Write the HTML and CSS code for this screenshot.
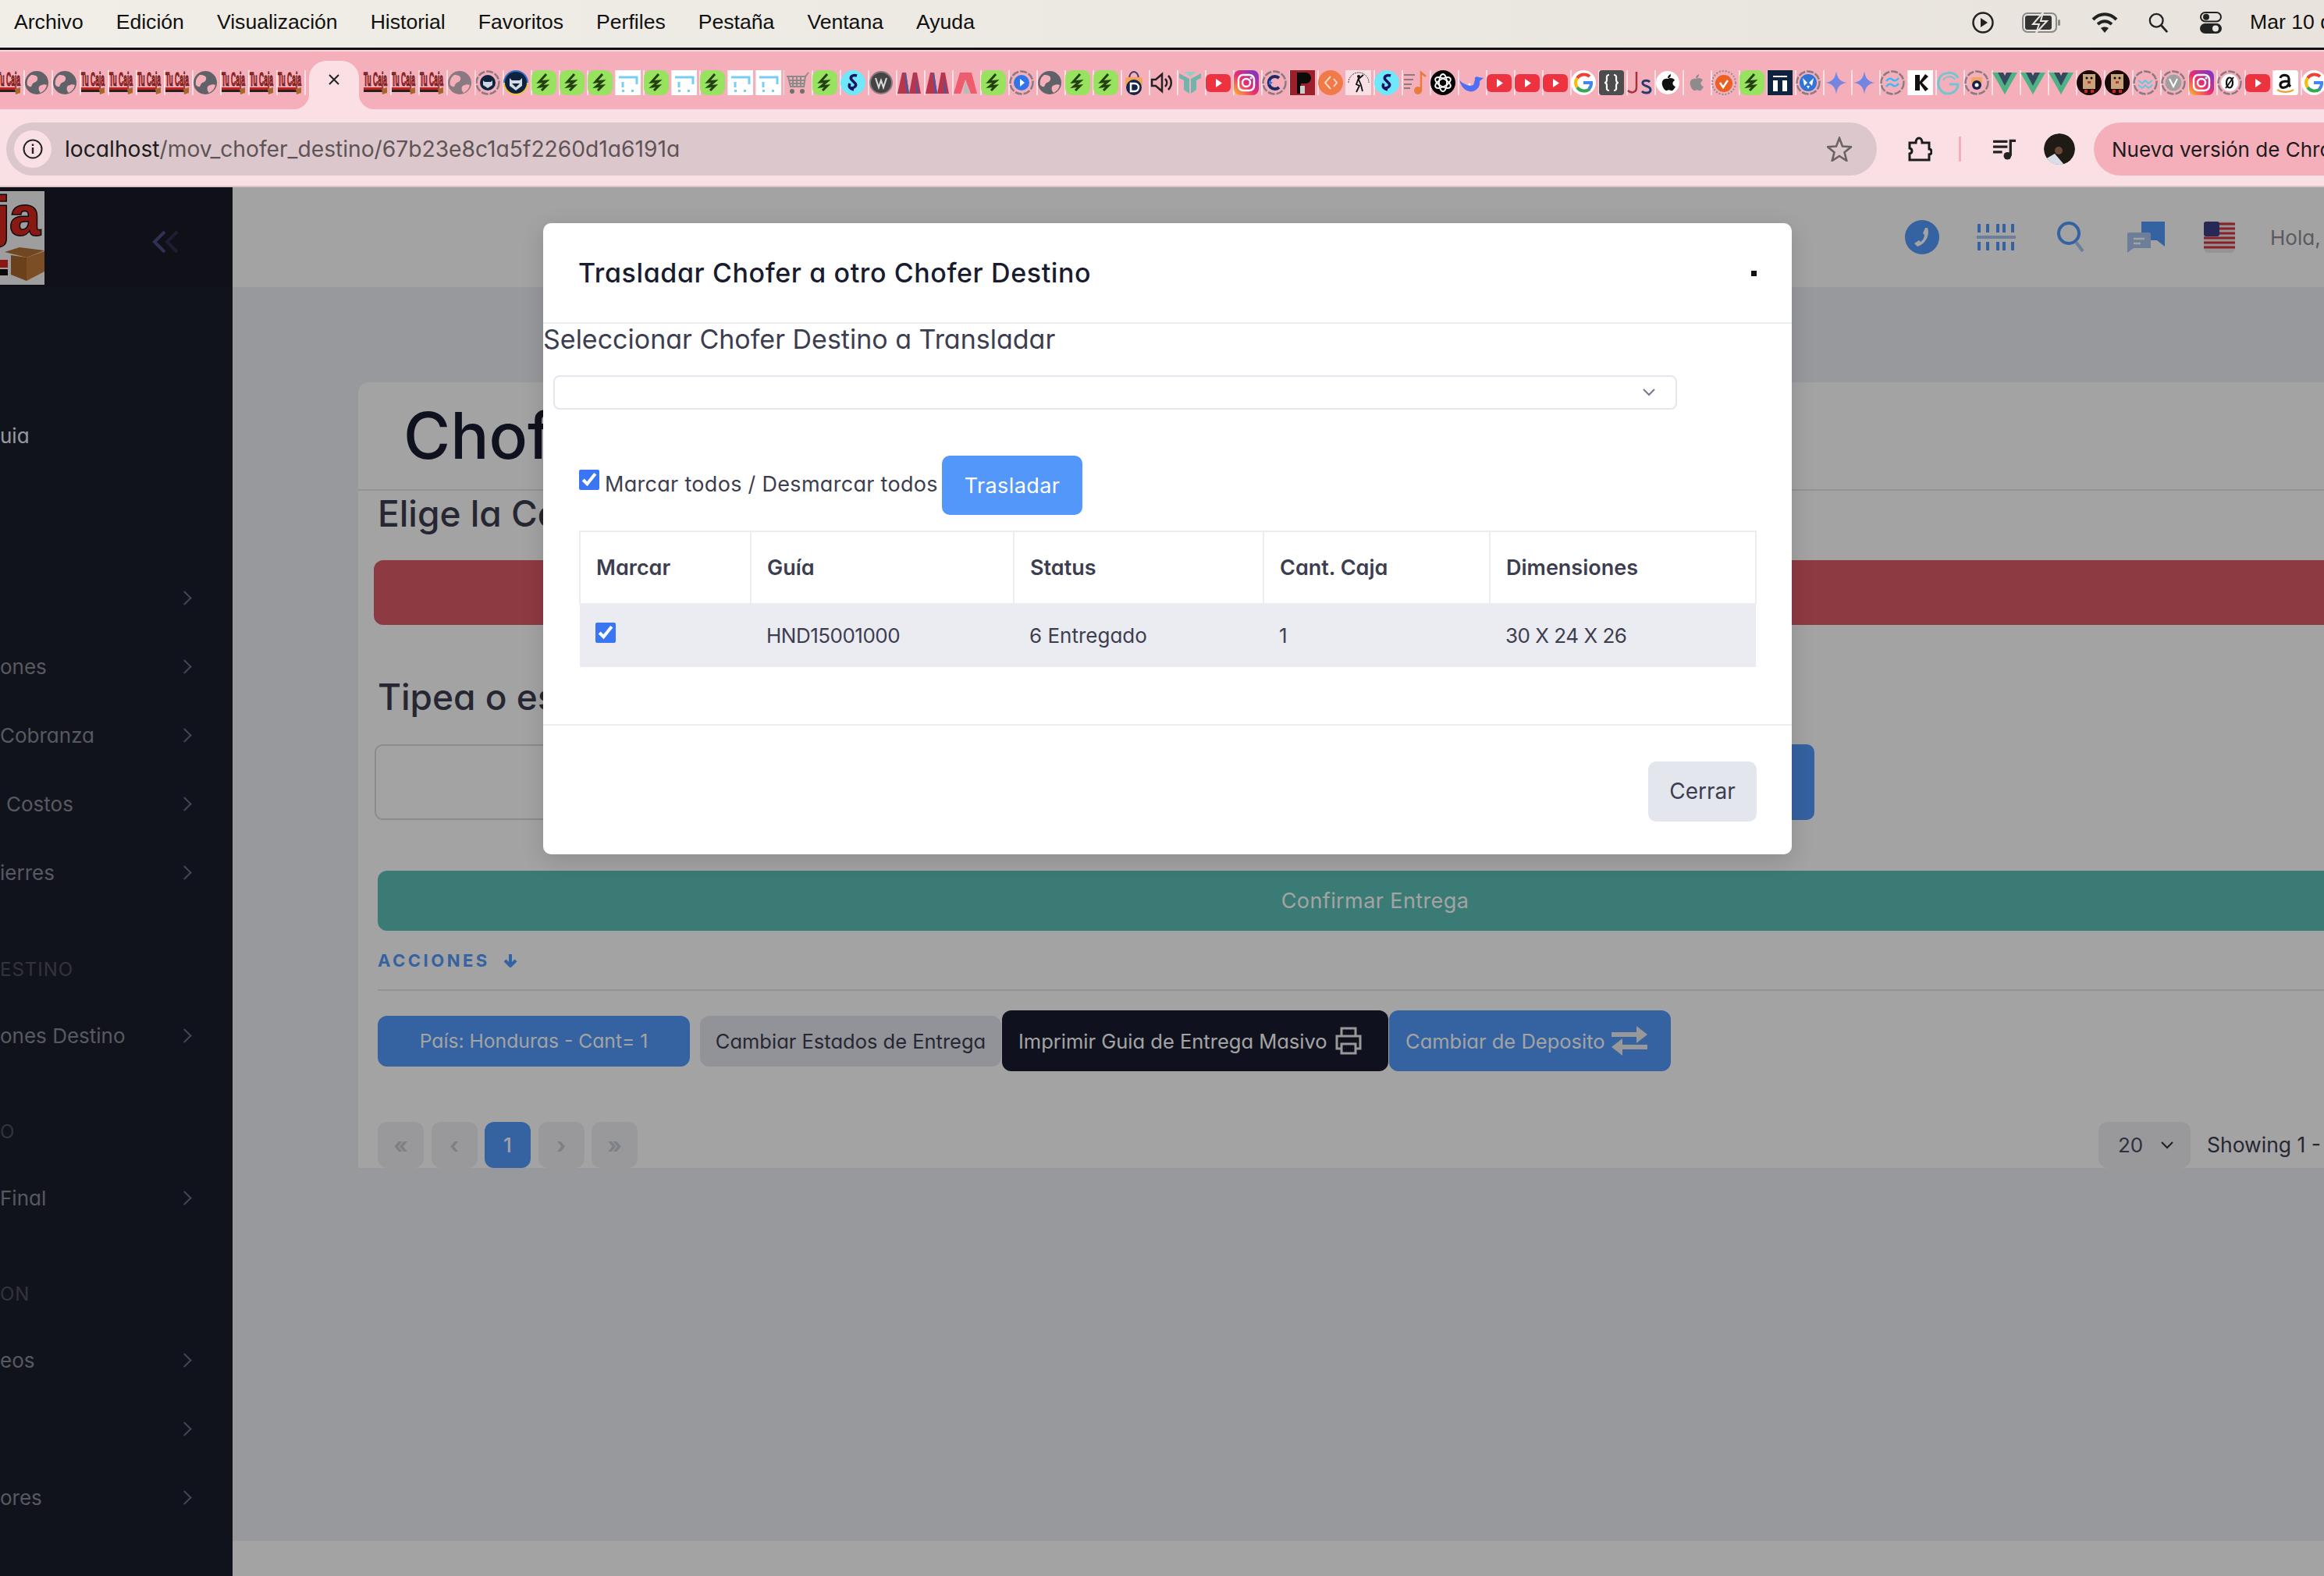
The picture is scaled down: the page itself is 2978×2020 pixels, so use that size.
FILE: index.html
```html
<!DOCTYPE html>
<html lang="es">
<head>
    <meta charset="UTF-8">
    <title>Chofer Destino</title>
    <link rel="stylesheet" href="styles.css">
</head>
<body>
<svg class="defs" width="0" height="0">
    <defs>
        <linearGradient id="igg" x1="0" y1="1" x2="1" y2="0"><stop offset="0" stop-color="#fdc02f"/><stop offset=".45" stop-color="#ee2d6b"/><stop offset="1" stop-color="#6a37d8"/></linearGradient>
        <linearGradient id="spg" x1="0" y1="0" x2="1" y2="1"><stop offset="0" stop-color="#4f8df0"/><stop offset="1" stop-color="#9a7ed0"/></linearGradient>
    </defs>
</svg>
<svg class="sprite">
    <symbol id="tc" viewBox="0 0 32 32">
        <text x="1" y="20" font-family="Liberation Sans" font-size="23" font-weight="700" fill="#d0201a" stroke="#2a1010" stroke-width=".9" textLength="30" lengthAdjust="spacingAndGlyphs">Tu Caja</text>
        <rect x="1" y="22" width="24" height="3" fill="#c4201c"/><rect x="1" y="25" width="24" height="3" fill="#222"/>
        <path d="M24 24l7-2v7l-6 2z" fill="#a8662c"/>
    </symbol>
    <symbol id="globe" viewBox="0 0 32 32">
        <circle cx="16" cy="16" r="15" fill="#5f6368"/>
        <path d="M9 6c6 0 9 2 8 6s-6 3-7 7-4 2-6 0c-1-6 1-10 5-13zM20 20c4-2 7-2 9-1-1 5-4 8-8 10-3-3-3-7-1-9z" fill="#f4afbb"/>
    </symbol>
    <symbol id="bolt" viewBox="0 0 32 32">
        <rect width="32" height="32" rx="9" fill="#97e35f"/>
        <path d="M19 5L10 15l9-1-8 7 8-1-6 6" fill="none" stroke="#24400f" stroke-width="3"/>
    </symbol>
    <symbol id="heb" viewBox="0 0 32 32">
        <rect width="32" height="32" fill="#fff"/>
        <path d="M4 9h23v9M9 15v7" fill="none" stroke="#78cdf2" stroke-width="3"/>
        <rect x="8" y="25" width="3" height="3" fill="#78cdf2"/><rect x="20" y="25" width="3" height="3" fill="#78cdf2"/>
    </symbol>
    <symbol id="cart" viewBox="0 0 32 32">
        <rect width="32" height="32" fill="#f4afbb"/>
        <path d="M3 8h24l4-5M5 8l3 13h17l2-13M6 13h21M7 17h19M11 8v13M16 8v13M21 8v13" fill="none" stroke="#8d8a8a" stroke-width="2"/>
        <circle cx="10" cy="27" r="3" fill="#6f6f6f"/><circle cx="23" cy="27" r="3" fill="#6f6f6f"/>
    </symbol>
    <symbol id="scy" viewBox="0 0 32 32">
        <ellipse cx="16" cy="16" rx="16" ry="16" fill="#6fe8fb"/>
        <path d="M21 7c-6-2-9 2-7 5l5 5c2 3-1 6-6 6M12 17c-2 4 0 7 5 8" fill="none" stroke="#1b1262" stroke-width="3.5"/>
    </symbol>
    <symbol id="wp" viewBox="0 0 32 32">
        <circle cx="16" cy="16" r="14" fill="#444" stroke="#8a7a82" stroke-width="2"/>
        <path d="M9 10l4 12 3-9 3 9 4-12" fill="none" stroke="#ddd" stroke-width="2"/>
    </symbol>
    <symbol id="mred" viewBox="0 0 32 32">
        <path d="M1 30L7 3h5l4 27zM16 30L21 3h5l5 27z" fill="#b8364c"/><path d="M12 4l4 26h-3L10 4zM24 6l4 24h-3z" fill="#4a5aa0"/>
    </symbol>
    <symbol id="ared" viewBox="0 0 32 32">
        <path d="M1 30L9 3h15l7 27h-8L16 12l-6 18z" fill="#ee5d6e"/><path d="M13 30l3-18 6 18z" fill="#bbb"/>
    </symbol>
    <symbol id="rplay" viewBox="0 0 32 32">
        <circle cx="16" cy="16" r="14.5" fill="none" stroke="#8a7a82" stroke-width="2.5" stroke-dasharray="9 2"/>
        <circle cx="16" cy="16" r="10" fill="#2f74e8"/><path d="M14 11l6 5-6 5z" fill="#fff"/>
    </symbol>
    <symbol id="rcat" viewBox="0 0 32 32">
        <circle cx="16" cy="16" r="14.5" fill="none" stroke="#8a7a82" stroke-width="2.5" stroke-dasharray="9 2"/>
        <circle cx="16" cy="16" r="10" fill="#0d2340"/><path d="M10 13l2 2h8l2-2v6l-6 4-6-4z" fill="#cfd6e0"/>
    </symbol>
    <symbol id="cat" viewBox="0 0 32 32">
        <circle cx="16" cy="16" r="16" fill="#f5c23a"/><path d="M0 16a16 16 0 0 1 32 0z" fill="#2f6fd0"/>
        <circle cx="16" cy="16" r="14" fill="#0d2340"/><path d="M8 10l3 3h10l3-3v10l-8 6-8-6z" fill="#d5dbe4"/><path d="M11 17h10l-5 5z" fill="#0d2340"/>
    </symbol>
    <symbol id="bag" viewBox="0 0 32 32">
        <path d="M10 11c0-12 12-12 12 0" fill="none" stroke="#3d3a6a" stroke-width="2"/>
        <rect x="5" y="9" width="22" height="12" rx="3" fill="#f2a65a"/>
        <circle cx="16" cy="22" r="10" fill="#16224e"/><path d="M12 17h5a5 5 0 0 1 0 10h-5z" fill="none" stroke="#fff" stroke-width="2.5"/>
    </symbol>
    <symbol id="speak" viewBox="0 0 32 32">
        <path d="M3 12h5l8-7v22l-8-7H3z" fill="none" stroke="#222" stroke-width="2.5"/>
        <path d="M20 11c3 3 3 7 0 10M24 7c5 5 5 13 0 18" fill="none" stroke="#222" stroke-width="2.5"/>
    </symbol>
    <symbol id="ty" viewBox="0 0 32 32">
        <path d="M2 4l13 7v19l-7-5V13L2 10zM30 4l-13 7v19l7-5V13l6-3z" fill="#6fb5ad"/><path d="M8 2h16l-8 6z" fill="#8ed0c7"/>
    </symbol>
    <symbol id="yt" viewBox="0 0 32 32">
        <rect y="5" width="32" height="23" rx="6" fill="#ee3340"/><path d="M13 11l8 5.500-8 5.500z" fill="#fff"/>
    </symbol>
    <symbol id="ig" viewBox="0 0 32 32">
        <rect width="32" height="32" rx="8" fill="url(#igg)"/>
        <rect x="6" y="6" width="20" height="20" rx="6" fill="none" stroke="#fff" stroke-width="2.500"/>
        <circle cx="16" cy="16" r="5" fill="none" stroke="#fff" stroke-width="2.500"/><circle cx="22" cy="10" r="1.500" fill="#fff"/>
    </symbol>
    <symbol id="rc" viewBox="0 0 32 32">
        <circle cx="16" cy="16" r="14.5" fill="none" stroke="#8a7a82" stroke-width="2.5" stroke-dasharray="9 2"/>
        <path d="M22 10a8 8 0 1 0 0 12" fill="none" stroke="#1e2a66" stroke-width="4"/><path d="M9 13l5 3-5 3z" fill="#2f74e8"/>
    </symbol>
    <symbol id="pred" viewBox="0 0 32 32">
        <rect width="32" height="32" fill="#9c1f2c"/><path d="M9 3h11a6 6 0 0 1 0 14h-6v13H9z" fill="#0b0b0b"/><rect x="13" y="20" width="6" height="10" fill="#ccc"/>
    </symbol>
    <symbol id="dia" viewBox="0 0 32 32">
        <ellipse cx="16" cy="16" rx="16" ry="16" fill="#f07a48"/><path d="M16 8l-7 8 7 8M20 11l4 5-4 5" fill="none" stroke="#fbd9c8" stroke-width="2"/>
    </symbol>
    <symbol id="golf" viewBox="0 0 32 32">
        <rect width="32" height="32" fill="#fae0e5"/>
        <path d="M3 16a13 13 0 0 1 26 0" fill="none" stroke="#333" stroke-width="1" stroke-dasharray="2 1"/>
        <circle cx="16" cy="8" r="2" fill="#111"/><path d="M16 10l-3 8 4 2-4 8M16 12l3 7 2 8M15 12l7-6" fill="none" stroke="#111" stroke-width="1.800"/>
    </symbol>
    <symbol id="music" viewBox="0 0 32 32">
        <path d="M2 6h14M2 12h12M2 18h10M2 23h8" stroke="#8a7a82" stroke-width="2"/>
        <path d="M24 26V3l6 5" fill="none" stroke="#e97c3a" stroke-width="2.500"/><circle cx="20" cy="26" r="5" fill="#e97c3a"/>
    </symbol>
    <symbol id="oai" viewBox="0 0 32 32">
        <circle cx="16" cy="16" r="16" fill="#000"/>
        <g fill="none" stroke="#fff" stroke-width="1.800"><ellipse cx="16" cy="16" rx="5" ry="11"/><ellipse cx="16" cy="16" rx="5" ry="11" transform="rotate(60 16 16)"/><ellipse cx="16" cy="16" rx="5" ry="11" transform="rotate(120 16 16)"/></g>
    </symbol>
    <symbol id="whale" viewBox="0 0 32 32">
        <path d="M1 13c3 10 10 16 18 14 6-2 9-8 8-13l5-4-6-1c-3-2-6 0-5 3l-2 7c-6 2-12-1-18-6z" fill="#4f6ef2"/><circle cx="14" cy="18" r="1.500" fill="#fff"/>
    </symbol>
    <symbol id="gg" viewBox="0 0 32 32">
        <circle cx="16" cy="16" r="16" fill="#fff"/>
        <path d="M24 8a11 11 0 0 0-16 2" fill="none" stroke="#ea4335" stroke-width="4"/><path d="M8 10a11 11 0 0 0 0 12" fill="none" stroke="#fbbc05" stroke-width="4"/>
        <path d="M8 22a11 11 0 0 0 16 2" fill="none" stroke="#34a853" stroke-width="4"/><path d="M16 16h10a10 10 0 0 1-3 8" fill="none" stroke="#4285f4" stroke-width="4"/>
    </symbol>
    <symbol id="curly" viewBox="0 0 32 32">
        <rect width="32" height="32" rx="4" fill="#4d4d4d"/><path d="M13 6c-4 0-3 3-3 6s-1 4-3 4c2 0 3 1 3 4s-1 6 3 6M19 6c4 0 3 3 3 6s1 4 3 4c-2 0-3 1-3 4s1 6-3 6" fill="none" stroke="#fff" stroke-width="2.200"/>
    </symbol>
    <symbol id="js" viewBox="0 0 32 32">
        <path d="M12 2v20c0 7-7 8-11 4" fill="none" stroke="#a8323a" stroke-width="2.500"/><path d="M29 15c-3-3-10-2-9 2s10 3 10 8-8 5-11 2" fill="none" stroke="#1d3c70" stroke-width="3"/>
    </symbol>
    <symbol id="apw" viewBox="0 0 32 32">
        <circle cx="16" cy="16" r="15" fill="#fff"/><path d="M16 11c3-2 8-1 9 2-4 2-3 7 1 8-2 4-4 6-6 5s-3-1-5 0-5-3-6-7 1-9 7-8zM16 10c0-3 2-4 4-5 0 3-1 5-4 5z" fill="#111"/>
    </symbol>
    <symbol id="apg" viewBox="0 0 32 32">
        <path d="M16 11c3-2 8-1 9 2-4 2-3 7 1 8-2 4-4 6-6 5s-3-1-5 0-5-3-6-7 1-9 7-8zM16 10c0-3 2-4 4-5 0 3-1 5-4 5z" fill="#8c8c8c"/>
    </symbol>
    <symbol id="star" viewBox="0 0 32 32">
        <circle cx="16" cy="16" r="15" fill="none" stroke="#8d8d8d" stroke-width="2" stroke-dasharray="2 2"/>
        <circle cx="16" cy="17" r="11" fill="#ea5f22"/><path d="M11 16l4 6 6-9" fill="none" stroke="#fff" stroke-width="2.500"/>
    </symbol>
    <symbol id="ii" viewBox="0 0 32 32">
        <rect width="32" height="32" fill="#0d2340"/><path d="M7 13h6v14H7zM19 13h6v14h-6zM7 7h18v2H7z" fill="#fff"/>
    </symbol>
    <symbol id="rbut" viewBox="0 0 32 32">
        <circle cx="16" cy="16" r="14.5" fill="none" stroke="#8a7a82" stroke-width="2.5" stroke-dasharray="9 2"/>
        <circle cx="16" cy="16" r="11" fill="#2f74d8"/><path d="M9 10l6 6-4 4zM23 10l-6 6 4 4zM14 20h4l-2 4z" fill="#fff"/>
    </symbol>
    <symbol id="spark" viewBox="0 0 32 32">
        <path d="M16 1c1 9 5 14 14 15-9 1-13 6-14 15-1-9-5-14-14-15 9-1 13-6 14-15z" fill="url(#spg)"/>
    </symbol>
    <symbol id="rtw" viewBox="0 0 32 32">
        <circle cx="16" cy="16" r="14.5" fill="none" stroke="#8a7a82" stroke-width="2.5" stroke-dasharray="9 2"/>
        <path d="M8 14c3-4 6-4 8-2s5 2 8-2M8 21c3-4 6-4 8-2s5 2 8-2" fill="none" stroke="#38bdf8" stroke-width="2.500"/>
    </symbol>
    <symbol id="kk" viewBox="0 0 32 32">
        <rect width="32" height="32" fill="#fff"/><path d="M9 6h6v20H9zM22 5l4 3-8 8 8 8-4 3-8-11z" fill="#111"/>
    </symbol>
    <symbol id="gt" viewBox="0 0 32 32">
        <path d="M28 10C24 1 8 1 4 11c-4 9 2 19 11 19 7 0 13-5 13-12H17" fill="none" stroke="#71c6cf" stroke-width="3"/><path d="M24 12c-3-5-12-5-15 1" fill="none" stroke="#71c6cf" stroke-width="2"/>
    </symbol>
    <symbol id="rbag" viewBox="0 0 32 32">
        <circle cx="16" cy="16" r="14.5" fill="none" stroke="#8a7a82" stroke-width="2.5" stroke-dasharray="9 2"/>
        <rect x="9" y="9" width="14" height="8" rx="2" fill="#f2a65a"/><circle cx="16" cy="19" r="6" fill="#16224e"/><circle cx="16" cy="19" r="2.500" fill="#fff"/>
    </symbol>
    <symbol id="vue" viewBox="0 0 32 32">
        <path d="M0 3h10l6 11 6-11h10L16 31z" fill="#4fb286"/><path d="M7 3h7l2 4 2-4h7L16 20z" fill="#35495e"/>
    </symbol>
    <symbol id="box" viewBox="0 0 32 32">
        <circle cx="16" cy="16" r="16" fill="#1a0808"/><rect x="8" y="5" width="16" height="19" fill="#c9a37a"/><circle cx="13" cy="10" r="1.500"/><circle cx="19" cy="10" r="1.500"/>
        <rect x="14" y="14" width="4" height="3" fill="#c0322a"/><rect x="10" y="25" width="4" height="4" fill="#d02020"/><rect x="18" y="25" width="4" height="4" fill="#d02020"/>
    </symbol>
    <symbol id="rwave" viewBox="0 0 32 32">
        <circle cx="16" cy="16" r="14.5" fill="none" stroke="#8a7a82" stroke-width="2.5" stroke-dasharray="9 2"/>
        <path d="M7 13l5 4 4-4 4 4 5-4M7 19l5 4 4-4 4 4 5-4" fill="none" stroke="#5bc8e8" stroke-width="1.800"/>
    </symbol>
    <symbol id="rv" viewBox="0 0 32 32">
        <circle cx="16" cy="16" r="14.5" fill="none" stroke="#8a7a82" stroke-width="2.5" stroke-dasharray="9 2"/>
        <circle cx="16" cy="16" r="10.500" fill="#a0a0a0"/><path d="M11 11l5 10 5-10" fill="none" stroke="#fff" stroke-width="2"/>
    </symbol>
    <symbol id="rzero" viewBox="0 0 32 32">
        <circle cx="16" cy="16" r="14.5" fill="none" stroke="#8a7a82" stroke-width="2.5" stroke-dasharray="9 2"/>
        <circle cx="16" cy="16" r="11" fill="#fff"/><ellipse cx="16" cy="16" rx="4" ry="6.500" fill="none" stroke="#111" stroke-width="2.200"/><path d="M11 23l10-14" stroke="#111" stroke-width="1.800"/>
    </symbol>
    <symbol id="amz" viewBox="0 0 32 32">
        <rect width="32" height="32" rx="4" fill="#fff"/>
        <path d="M20 20V11c0-6-10-6-11-1M20 14c-8 0-11 1-11 5 0 5 8 4 11-1M20 17c0 2 1 3 2 4" fill="none" stroke="#111" stroke-width="3.200"/>
        <path d="M5 25c6 4 15 4 21 0" fill="none" stroke="#f59b22" stroke-width="2"/>
    </symbol>
</svg>

<div class="menubar">
    <nav class="menus">
        <span>Archivo</span><span>Edición</span><span>Visualización</span><span>Historial</span><span>Favoritos</span><span>Perfiles</span><span>Pestaña</span><span>Ventana</span><span>Ayuda</span>
    </nav>
    <div class="status">
        <svg class="st-play" viewBox="0 0 28 28"><circle cx="14" cy="14" r="12.500" fill="none" stroke="#222" stroke-width="2.500"/><path d="M11 8l9 6-9 6z" fill="#222"/></svg>
        <svg class="st-batt" viewBox="0 0 50 28"><rect x="1" y="2" width="43" height="24" rx="6" fill="none" stroke="#888" stroke-width="2"/><rect x="4" y="5" width="34" height="18" rx="3" fill="#333"/><rect x="46" y="10" width="3" height="8" rx="1.500" fill="#888"/><path d="M27 1L14 16h8l-4 11 14-15h-8z" fill="#333" stroke="#e9e6df" stroke-width="2"/></svg>
        <svg class="st-wifi" viewBox="0 0 34 28"><path d="M2 10c9-9 21-9 30 0M8 16c6-5 12-5 18 0" fill="none" stroke="#222" stroke-width="4"/><path d="M12 21c3-2 7-2 10 0l-5 6z" fill="#222"/></svg>
        <svg class="st-search" viewBox="0 0 28 28"><circle cx="11" cy="11" r="9" fill="none" stroke="#222" stroke-width="2.500"/><path d="M18 18l8 9" stroke="#222" stroke-width="3"/></svg>
        <svg class="st-ctrl" viewBox="0 0 28 28"><rect x="1" y="1" width="26" height="11.500" rx="5.700" fill="none" stroke="#222" stroke-width="2"/><circle cx="8" cy="6.700" r="4" fill="#222"/><rect y="15" width="28" height="13" rx="6.500" fill="#222"/><circle cx="20" cy="21.500" r="4" fill="#e9e6df"/></svg>
        <span class="clock">Mar 10 de</span>
    </div>
</div>

<div class="tabstrip">
    <div class="favs favs-left">
        <svg class="fav"><use href="#tc"/></svg><svg class="fav"><use href="#globe"/></svg><svg class="fav"><use href="#globe"/></svg><svg class="fav"><use href="#tc"/></svg><svg class="fav"><use href="#tc"/></svg><svg class="fav"><use href="#tc"/></svg><svg class="fav"><use href="#tc"/></svg><svg class="fav"><use href="#globe"/></svg><svg class="fav"><use href="#tc"/></svg><svg class="fav"><use href="#tc"/></svg><svg class="fav"><use href="#tc"/></svg>
    </div>
    <div class="tab-active">
        <svg class="tab-x" viewBox="0 0 14 14"><path d="M1 1l12 12M13 1L1 13" stroke="#222" stroke-width="2"/></svg>
    </div>
    <div class="favs">
        <svg class="fav"><use href="#tc"/></svg><svg class="fav"><use href="#tc"/></svg><svg class="fav"><use href="#tc"/></svg><svg class="fav dim"><use href="#globe"/></svg><svg class="fav"><use href="#rcat"/></svg><svg class="fav"><use href="#cat"/></svg><svg class="fav"><use href="#bolt"/></svg><svg class="fav"><use href="#bolt"/></svg><svg class="fav"><use href="#bolt"/></svg><svg class="fav"><use href="#heb"/></svg><svg class="fav"><use href="#bolt"/></svg><svg class="fav"><use href="#heb"/></svg><svg class="fav"><use href="#bolt"/></svg><svg class="fav"><use href="#heb"/></svg><svg class="fav"><use href="#heb"/></svg><svg class="fav"><use href="#cart"/></svg><svg class="fav"><use href="#bolt"/></svg><svg class="fav"><use href="#scy"/></svg><svg class="fav"><use href="#wp"/></svg><svg class="fav"><use href="#mred"/></svg><svg class="fav"><use href="#mred"/></svg><svg class="fav"><use href="#ared"/></svg><svg class="fav"><use href="#bolt"/></svg><svg class="fav"><use href="#rplay"/></svg><svg class="fav"><use href="#globe"/></svg><svg class="fav"><use href="#bolt"/></svg><svg class="fav"><use href="#bolt"/></svg><svg class="fav"><use href="#bag"/></svg><svg class="fav"><use href="#speak"/></svg><svg class="fav"><use href="#ty"/></svg><svg class="fav"><use href="#yt"/></svg><svg class="fav"><use href="#ig"/></svg><svg class="fav"><use href="#rc"/></svg><svg class="fav"><use href="#pred"/></svg><svg class="fav"><use href="#dia"/></svg><svg class="fav"><use href="#golf"/></svg><svg class="fav"><use href="#scy"/></svg><svg class="fav"><use href="#music"/></svg><svg class="fav"><use href="#oai"/></svg><svg class="fav"><use href="#whale"/></svg><svg class="fav"><use href="#yt"/></svg><svg class="fav"><use href="#yt"/></svg><svg class="fav"><use href="#yt"/></svg><svg class="fav"><use href="#gg"/></svg><svg class="fav"><use href="#curly"/></svg><svg class="fav"><use href="#js"/></svg><svg class="fav"><use href="#apw"/></svg><svg class="fav"><use href="#apg"/></svg><svg class="fav"><use href="#star"/></svg><svg class="fav"><use href="#bolt"/></svg><svg class="fav"><use href="#ii"/></svg><svg class="fav"><use href="#rbut"/></svg><svg class="fav"><use href="#spark"/></svg><svg class="fav"><use href="#spark"/></svg><svg class="fav"><use href="#rtw"/></svg><svg class="fav"><use href="#kk"/></svg><svg class="fav"><use href="#gt"/></svg><svg class="fav"><use href="#rbag"/></svg><svg class="fav"><use href="#vue"/></svg><svg class="fav"><use href="#vue"/></svg><svg class="fav"><use href="#vue"/></svg><svg class="fav"><use href="#box"/></svg><svg class="fav"><use href="#box"/></svg><svg class="fav"><use href="#rwave"/></svg><svg class="fav"><use href="#rv"/></svg><svg class="fav"><use href="#ig"/></svg><svg class="fav"><use href="#rzero"/></svg><svg class="fav"><use href="#yt"/></svg><svg class="fav"><use href="#amz"/></svg><svg class="fav"><use href="#gg"/></svg>
    </div>
</div>

<div class="toolbar">
    <div class="omnibox">
        <span class="info-chip"><svg viewBox="0 0 26 26"><circle cx="13" cy="13" r="11.500" fill="none" stroke="#222" stroke-width="2"/><path d="M13 11v8M13 6.500v2.500" stroke="#222" stroke-width="2.400"/></svg></span>
        <span class="url"><b>localhost</b>/mov_chofer_destino/67b23e8c1a5f2260d1a6191a</span>
        <svg class="bookmark" viewBox="0 0 32 32"><path d="M16 2l4 10.500 11 .8-8.500 7 2.800 10.700L16 25l-9.300 6 2.800-10.700-8.500-7 11-.8z" fill="none" stroke="#6a6265" stroke-width="2.600"/></svg>
    </div>
    <svg class="puzzle" viewBox="0 0 32 32"><path d="M3 8h8c0-8 8-8 8 0h9v8c4 0 4 7 0 7v7H3v-8c4-1 4-6 0-7z" fill="none" stroke="#1c1c1c" stroke-width="3"/></svg>
    <span class="tool-sep"></span>
    <svg class="queue" viewBox="0 0 32 28"><path d="M1 4h19M1 11h19M1 18h12" stroke="#222" stroke-width="3.400"/><path d="M24 23V3h7" fill="none" stroke="#222" stroke-width="3.400"/><circle cx="20" cy="23" r="5" fill="#222"/></svg>
    <span class="avatar"><svg viewBox="0 0 40 40"><circle cx="20" cy="20" r="20" fill="#201a14"/><path d="M0 34l14-8 12 14H8z" fill="#d8dfe8"/><circle cx="19" cy="22" r="5" fill="#6a4a3a"/></svg></span>
    <span class="update-pill">Nueva versión de Chrome disponible</span>
</div>

<div class="app">
    <aside class="sidebar">
        <div class="side-top">
            <svg class="logo" viewBox="0 0 57 120">
                <rect width="57" height="120" fill="#f8f8f8"/>
                <text x="-7" y="56" font-family="Liberation Sans" font-size="70" font-weight="700" fill="#d8261e" stroke="#111" stroke-width="3" paint-order="stroke">ja</text>
                <rect y="88" width="10" height="10" fill="#d8261e"/><rect y="100" width="10" height="8" fill="#111"/>
                <path d="M6 78l19-6 32 4-23 9z" fill="#b06f33"/><path d="M14 82l20 3v30l-20-8z" fill="#a8662c"/><path d="M34 85l23-8v26l-23 12z" fill="#c17b3b"/>
            </svg>
            <svg class="collapse" viewBox="0 0 36 30"><path d="M17 2L4 15l13 13" fill="none" stroke="#4a4c86" stroke-width="4"/><path d="M33 2L20 15l13 13" fill="none" stroke="#2e3050" stroke-width="4"/></svg>
        </div>
        <ul class="side-nav">
            <li class="side-item item-guia"><span class="side-text light">uia</span></li>
            <li class="side-item item-first"><span class="side-text"></span><i class="chev"></i></li>
            <li class="side-item"><span class="side-text">ones</span><i class="chev"></i></li>
            <li class="side-item"><span class="side-text">Cobranza</span><i class="chev"></i></li>
            <li class="side-item"><span class="side-text indent">Costos</span><i class="chev"></i></li>
            <li class="side-item"><span class="side-text">ierres</span><i class="chev"></i></li>
            <li class="side-title">ESTINO</li>
            <li class="side-item"><span class="side-text">ones Destino</span><i class="chev"></i></li>
            <li class="side-title">O</li>
            <li class="side-item"><span class="side-text">Final</span><i class="chev"></i></li>
            <li class="side-title">ON</li>
            <li class="side-item"><span class="side-text">eos</span><i class="chev"></i></li>
            <li class="side-item"><span class="side-text"></span><i class="chev"></i></li>
            <li class="side-item"><span class="side-text">ores</span><i class="chev"></i></li>
        </ul>
    </aside>

    <main class="main">
        <header class="topbar">
            <svg class="top-ico phone" viewBox="0 0 44 44"><circle cx="22" cy="22" r="22" fill="#5399fc"/><path d="M29 10c3 8-1 20-13 24l-4-4 6-4 2 2c3-2 5-6 5-9l-2-2 3-7z" fill="#fff"/></svg>
            <svg class="top-ico bars" viewBox="0 0 50 34"><path d="M0 17h50" stroke="#a9c6ee" stroke-width="4"/><path d="M3 0v11M3 23v11M14 0v11M14 23v11M27 0v11M27 23v11M35 0v11M35 23v11M46 0v11M46 23v11" stroke="#5399fc" stroke-width="4"/></svg>
            <svg class="top-ico find" viewBox="0 0 36 40"><circle cx="15" cy="15" r="13" fill="none" stroke="#5399fc" stroke-width="4"/><path d="M24 26l9 12" stroke="#a9c6ee" stroke-width="4"/></svg>
            <svg class="top-ico chat" viewBox="0 0 48 40"><path d="M18 0h30v32l-10-8H18z" fill="#5399fc"/><path d="M2 14h26a2 2 0 0 1 2 2v18H8l-8 6V16a2 2 0 0 1 2-2z" fill="#a9c6ee"/><path d="M8 22h14M8 28h9" stroke="#fff" stroke-width="2.500"/></svg>
            <svg class="top-ico flag" viewBox="0 0 40 40">
                <rect width="40" height="40" rx="6" fill="#e8e8ec"/>
                <path d="M6 3h34M0 9h40M0 15h40M0 21h40M0 27h40M0 33h40" stroke="#d8343c" stroke-width="3"/>
                <rect width="20" height="19" rx="3" fill="#3d3f86"/>
            </svg>
            <span class="hello">Hola,</span>
        </header>

        <section class="card">
            <div class="card-head"><h1>Chofer</h1></div>
            <h2 class="card-sub first">Elige la Caja</h2>
            <div class="danger-bar"></div>
            <h2 class="card-sub second">Tipea o escanea</h2>
            <div class="scan-row">
                <input class="scan-input" type="text">
                <button class="scan-btn"></button>
            </div>
            <button class="confirm-btn">Confirmar Entrega</button>
            <div class="actions-title">ACCIONES
                <svg viewBox="0 0 18 18"><path d="M9 1v14M2 9l7 7 7-7" fill="none" stroke="#5399fc" stroke-width="4"/></svg>
            </div>
            <div class="actions">
                <span class="btn btn-blue btn-low country">País: Honduras - Cant= 1</span>
                <span class="btn btn-gray btn-low states">Cambiar Estados de Entrega</span>
                <span class="btn btn-dark print">Imprimir Guia de Entrega Masivo
                    <svg viewBox="0 0 34 36"><path d="M8 12V2h18v10M8 28H2V12h30v16h-6M8 22h18v12H8z" fill="none" stroke="#eee" stroke-width="3"/></svg>
                </span>
                <span class="btn btn-blue depot">Cambiar de Deposito
                    <svg viewBox="0 0 46 38"><path d="M0 11h36" stroke="#eee" stroke-width="6"/><path d="M32 0l14 11-14 11z" fill="#eee"/><path d="M46 27H10" stroke="#eee" stroke-width="6"/><path d="M14 16L0 27l14 11z" fill="#eee"/></svg>
                </span>
            </div>
            <div class="pager">
                <ul class="pages">
                    <li>«</li><li>‹</li><li class="current">1</li><li>›</li><li>»</li>
                </ul>
                <div class="page-size">20 <svg viewBox="0 0 16 10"><path d="M1 1l7 7 7-7" fill="none" stroke="#2f303e" stroke-width="2"/></svg></div>
                <span class="showing">Showing 1 - 1</span>
            </div>
        </section>
        <footer class="page-foot"></footer>
    </main>

    <div class="backdrop"></div>

    <div class="modal">
        <div class="modal-head">
            <h3>Trasladar Chofer a otro Chofer Destino</h3>
            <span class="modal-close"></span>
        </div>
        <h4 class="modal-label">Seleccionar Chofer Destino a Transladar</h4>
        <div class="modal-select"><svg viewBox="0 0 16 10"><path d="M1 1l7 7 7-7" fill="none" stroke="#77778c" stroke-width="2"/></svg></div>
        <div class="mark-row">
            <input class="check" type="checkbox" checked>
            <label>Marcar todos / Desmarcar todos</label>
            <button class="move-btn">Trasladar</button>
        </div>
        <table class="guides">
            <thead>
                <tr><th class="c1">Marcar</th><th class="c2">Guía</th><th class="c3">Status</th><th class="c4">Cant. Caja</th><th>Dimensiones</th></tr>
            </thead>
            <tbody>
                <tr><td><input class="check" type="checkbox" checked></td><td class="tight">HND15001000</td><td>6 Entregado</td><td>1</td><td class="tight">30 X 24 X 26</td></tr>
            </tbody>
        </table>
        <div class="modal-foot"><button class="close-btn">Cerrar</button></div>
    </div>
</div>
</body>
</html>
```

FILE: styles.css
```css
*{
    margin: 0;
    padding: 0;
    box-sizing: border-box;
}
ul{
    list-style: none;
}
html, body{
    width: 2978px;
    height: 2020px;
    overflow: hidden;
}
body{
    font-family: Inter, "Liberation Sans", sans-serif;
    font-feature-settings: "cv11";
    color: #2f303e;
    background: #eeeff5;
}
.defs{
    position: absolute;
}
.sprite{
    display: none;
}

/* barra de menu */
.menubar{
    height: 64px;
    display: flex;
    justify-content: space-between;
    align-items: center;
    padding-bottom: 4px;
    background: linear-gradient(90deg, #f0eee7, #e8e4dd);
    border-bottom: 3px solid #111;
    font-family: "Liberation Sans", sans-serif;
    font-size: 26.600px;
    color: #111;
}
.menus{
    display: flex;
    padding-left: 18px;
}
.menus span{
    margin-right: 42px;
}
.status{
    display: flex;
    align-items: center;
    width: 451px;
    flex-shrink: 0;
    overflow: hidden;
    white-space: nowrap;
}
.status svg{
    flex-shrink: 0;
}
.st-play{ width: 28px; height: 28px; margin-right: 36px; }
.st-batt{ width: 50px; height: 28px; margin-right: 39px; }
.st-wifi{ width: 34px; height: 28px; margin-right: 39px; }
.st-search{ width: 26px; height: 28px; margin-right: 40px; }
.st-ctrl{ width: 28px; height: 28px; margin-right: 36px; }

/* pestañas */
.tabstrip{
    height: 76px;
    padding-top: 24px;
    display: flex;
    align-items: flex-start;
    background: #f4afbb;
    border-top: 2px solid #f8d5dc;
    overflow: hidden;
}
.favs{
    display: flex;
    flex-shrink: 0;
}
.favs-left{
    width: 396px;
    margin-left: -5px;
    justify-content: flex-start;
}
.fav{
    width: 32px;
    height: 32px;
    margin-right: 4px;
    flex-shrink: 0;
    overflow: visible;
    box-shadow: 3px 0 0 #f4afbb, 5px 0 0 #fbdfe4;
}
.dim{
    opacity: .7;
}
.tab-active{
    position: relative;
    width: 64px;
    height: 62px;
    margin: -12px 5px 0 5px;
    display: flex;
    align-items: center;
    justify-content: center;
    background: #fae0e5;
    border-radius: 22px 22px 0 0;
    flex-shrink: 0;
    padding-bottom: 14px;
}
.tab-active::before,
.tab-active::after{
    content: "";
    position: absolute;
    bottom: 0;
    width: 20px;
    height: 20px;
}
.tab-active::before{
    left: -20px;
    background: radial-gradient(circle at 0 0, transparent 20px, #fae0e5 20.500px);
}
.tab-active::after{
    right: -20px;
    background: radial-gradient(circle at 100% 0, transparent 20px, #fae0e5 20.500px);
}
.tab-x{
    width: 14px;
    height: 14px;
}

/* barra de direcciones */
.toolbar{
    height: 100px;
    display: flex;
    align-items: center;
    padding-top: 4px;
    background: #fae0e5;
    white-space: nowrap;
    overflow: hidden;
    border-bottom: 2px solid #d8c4c9;
}
.omnibox{
    width: 2397px;
    height: 68px;
    margin-left: 8px;
    display: flex;
    align-items: center;
    padding-left: 10px;
    flex-shrink: 0;
    border-radius: 34px;
    background: #dcc8cc;
}
.info-chip{
    width: 48px;
    height: 48px;
    display: flex;
    align-items: center;
    justify-content: center;
    border-radius: 50%;
    background: #fae0e5;
}
.info-chip svg{
    width: 26px;
    height: 26px;
}
.url{
    margin-left: 17px;
    font-size: 28.200px;
    color: #5e5357;
    flex: 1;
}
.url b{
    font-weight: 400;
    color: #1d1b1c;
}
.bookmark{
    width: 32px;
    height: 32px;
    margin-right: 32px;
}
.puzzle{
    width: 32px;
    height: 32px;
    margin-left: 39px;
    flex-shrink: 0;
}
.tool-sep{
    width: 3px;
    height: 32px;
    margin-left: 34px;
    background: #f4afbb;
    flex-shrink: 0;
}
.queue{
    width: 31px;
    height: 28px;
    margin-left: 40px;
    flex-shrink: 0;
}
.avatar{
    width: 40px;
    height: 40px;
    margin-left: 35px;
    border-radius: 50%;
    overflow: hidden;
    flex-shrink: 0;
}
.update-pill{
    height: 68px;
    margin-left: 24px;
    padding: 0 23px;
    display: flex;
    align-items: center;
    flex-shrink: 0;
    border-radius: 34px;
    background: #f4afbb;
    font-size: 26px;
    color: #1d1b1c;
}

/* pagina */
.app{
    position: relative;
    height: 1780px;
    display: flex;
    overflow: hidden;
}
.sidebar{
    width: 298px;
    flex-shrink: 0;
    background: #1c1e2c;
    overflow: hidden;
}
.side-top{
    height: 128px;
    display: flex;
    padding-top: 5px;
    background: #181926;
}
.logo{
    width: 57px;
    height: 120px;
}
.collapse{
    width: 36px;
    height: 30px;
    margin: 50px 0 0 137px;
}
.side-nav{
    padding-top: 146px;
    font-size: 26px;
    color: #8a8a98;
}
.side-item{
    height: 88.200px;
    display: flex;
    align-items: center;
    justify-content: space-between;
    padding-right: 55px;
    white-space: nowrap;
}
.item-guia{
    height: 88px;
}
.item-first{
    margin-top: 120px;
}
.light{
    color: #eeeef6;
}
.indent{
    padding-left: 8px;
}
.chev{
    width: 13px;
    height: 13px;
    border-top: 2.500px solid #6c6c84;
    border-right: 2.500px solid #6c6c84;
    transform: rotate(45deg);
}
.side-title{
    height: 36px;
    line-height: 36px;
    margin: 62px 0 22px;
    font-size: 24px;
    letter-spacing: 1px;
    color: #50505f;
}

.main{
    flex: 1;
    min-width: 0;
    display: flex;
    flex-direction: column;
    overflow: hidden;
}
.topbar{
    height: 128px;
    flex-shrink: 0;
    display: flex;
    align-items: center;
    justify-content: flex-end;
    background: #fff;
    font-size: 26px;
    color: #8d8d96;
}
.top-ico{
    flex-shrink: 0;
}
.phone{ width: 44px; height: 44px; margin-right: 48px; }
.bars{ width: 50px; height: 34px; margin-right: 53px; }
.find{ width: 36px; height: 40px; margin-right: 54px; }
.chat{ width: 48px; height: 40px; margin-right: 50px; }
.flag{ width: 40px; height: 40px; margin-right: 45px; }
.hello{
    width: 69px;
    overflow: hidden;
}
.card{
    width: 2700px;
    height: 1007px;
    flex-shrink: 0;
    margin: 122px 0 0 161px;
    background: #fff;
    border-radius: 14px 14px 0 0;
}
.card-head{
    height: 139px;
    padding: 14px 0 0 58px;
    border-bottom: 2px solid #e3e4ea;
}
.card-head h1{
    font-size: 82px;
    font-weight: 500;
    color: #191c2f;
    line-height: 110px;
}
.card-sub{
    font-weight: 500;
    font-size: 46px;
    margin-left: 25px;
    line-height: 60px;
    color: #3c3e50;
}
.card-sub.first{
    margin-top: -1px;
}
.card-sub.second{
    margin-top: 62px;
}
.danger-bar{
    height: 83px;
    margin: 30px 0 0 20px;
    background: #df5b69;
    border-radius: 12px 0 0 12px;
}
.scan-row{
    display: flex;
    width: 1845px;
    height: 97px;
    margin: 31px 0 0 21px;
}
.scan-input{
    width: 1650px;
    border: 2px solid #d9dae2;
    border-radius: 10px;
    background: #fff;
}
.scan-btn{
    flex: 1;
    border: 0;
    border-radius: 0 10px 10px 0;
    background: #5399fc;
}
.confirm-btn{
    display: block;
    width: 2560px;
    height: 77px;
    margin: 65px 0 0 25px;
    padding-right: 4px;
    border: 0;
    border-radius: 12px 0 0 12px;
    background: #5cc0b8;
    font: 27px Inter, sans-serif;
    letter-spacing: .4px;
    color: #fff;
}
.actions-title{
    height: 77px;
    margin-left: 25px;
    padding-top: 20px;
    display: flex;
    align-items: flex-start;
    gap: 17px;
    line-height: 36px;
    font-size: 22px;
    font-weight: 700;
    letter-spacing: 3.500px;
    color: #5399fc;
    border-bottom: 2px solid #e6e7ee;
}
.actions-title svg{
    width: 18px;
    height: 18px;
    margin-top: 9px;
}
.actions{
    display: flex;
    align-items: center;
    margin: 25px 0 0 25px;
}
.btn{
    display: flex;
    align-items: center;
    justify-content: center;
    font-size: 25.500px;
    white-space: nowrap;
    height: 78px;
    border-radius: 12px;
}
.btn-low{
    height: 65px;
}
.btn svg{
    flex-shrink: 0;
}
.btn-blue{
    background: #5399fc;
    color: #fff;
}
.btn-gray{
    background: #e4e6ee;
    color: #3c3e50;
}
.btn-dark{
    background: #191c2f;
    color: #fff;
}
.country{ width: 400px; margin-right: 13px; font-size: 24.700px; }
.states{ width: 386px; margin-right: 1px; }
.print{ width: 495px; margin-right: 1px; gap: 10px; justify-content: flex-start; padding-left: 21px; }
.print svg{ width: 34px; height: 36px; }
.depot{ width: 361px; gap: 8px; justify-content: flex-start; padding-left: 21px; }
.depot svg{ width: 46px; height: 38px; }

.pager{
    display: flex;
    align-items: stretch;
    height: 59px;
    margin: 65px 0 0 25px;
}
.pages{
    display: flex;
    gap: 9.500px;
    width: 2205px;
}
.pages li{
    width: 59px;
    display: flex;
    align-items: center;
    justify-content: center;
    border-radius: 12px;
    background: #eff0f5;
    font-size: 28px;
    font-weight: 700;
    color: #c6c8d2;
}
.pages .current{
    background: #5399fc;
    color: #fff;
    font-weight: 500;
    font-size: 26px;
}
.page-size{
    width: 118px;
    display: flex;
    align-items: center;
    gap: 23px;
    padding-left: 25px;
    border-radius: 12px;
    background: #eff0f5;
    font-size: 26px;
    color: #4a4c60;
}
.page-size svg{
    width: 16px;
    height: 10px;
}
.showing{
    margin-left: 21px;
    line-height: 59px;
    font-size: 26.500px;
    color: #3c3e50;
    white-space: nowrap;
}
.page-foot{
    height: 45px;
    margin-top: auto;
    background: #fff;
}

/* modal */
.backdrop{
    position: absolute;
    inset: 0;
    background: rgba(0, 0, 0, .36);
}
.modal{
    position: absolute;
    left: 696px;
    top: 46px;
    width: 1600px;
    height: 809px;
    background: #fff;
    border-radius: 10px;
    box-shadow: 0 8px 30px rgba(0, 0, 0, .14);
}
.modal-head{
    height: 129px;
    display: flex;
    align-items: center;
    justify-content: space-between;
    padding: 0 45px;
    border-bottom: 2px solid #ecedf2;
}
.modal-head h3{
    font-size: 34px;
    letter-spacing: .6px;
    font-weight: 500;
    color: #191c2f;
}
.modal-close{
    width: 7px;
    height: 7px;
    margin-top: 2px;
    background: #111;
}
.modal-label{
    height: 40px;
    line-height: 40px;
    font-size: 34px;
    font-weight: 400;
    color: #3c3e50;
}
.modal-select{
    width: 1440px;
    height: 44px;
    margin: 26px 0 0 13px;
    display: flex;
    align-items: center;
    justify-content: flex-end;
    padding-right: 26px;
    border: 2px solid #e6e6ee;
    border-radius: 8px;
}
.modal-select svg{
    width: 16px;
    height: 10px;
}
.mark-row{
    display: flex;
    align-items: center;
    height: 76px;
    margin: 59px 0 0 46px;
    font-size: 27px;
    letter-spacing: .3px;
    color: #3c3e50;
}
.check{
    width: 26px;
    height: 26px;
    accent-color: #3a76f4;
}
.mark-row .check{
    margin: -14px 7px 0 0;
}
.mark-row label{
    width: 432px;
    margin-top: -4px;
    white-space: nowrap;
}
.move-btn{
    width: 180px;
    height: 76px;
    border: 0;
    border-radius: 10px;
    background: #5497fb;
    font: 27px Inter, sans-serif;
    letter-spacing: .4px;
    color: #fff;
}
.guides{
    width: 1509px;
    margin: 20px 0 0 46px;
    border-collapse: collapse;
    table-layout: fixed;
    font-size: 26px;
    color: #3c3e50;
}
.guides th{
    height: 93px;
    text-align: left;
    font-size: 27px;
    font-weight: 600;
    padding: 0 0 0 20px;
    border: 2px solid #ecedf2;
}
.guides td{
    height: 81px;
    padding: 0 0 2px 20px;
    background: #ebecf1;
}
.guides .tight{
    letter-spacing: -.5px;
}
.guides td .check{
    display: block;
    margin-top: -6px;
}
.c1{ width: 219px; }
.c2{ width: 337px; }
.c3{ width: 320px; }
.c4{ width: 290px; }
.modal-foot{
    margin-top: 73px;
    height: 124px;
    padding: 46px 45px 0 0;
    display: flex;
    justify-content: flex-end;
    border-top: 2px solid #ecedf2;
}
.close-btn{
    width: 139px;
    height: 77px;
    border: 0;
    border-radius: 10px;
    padding-bottom: 2px;
    background: #e4e6ee;
    font: 28px Inter, sans-serif;
    color: #3c3e50;
}
```
